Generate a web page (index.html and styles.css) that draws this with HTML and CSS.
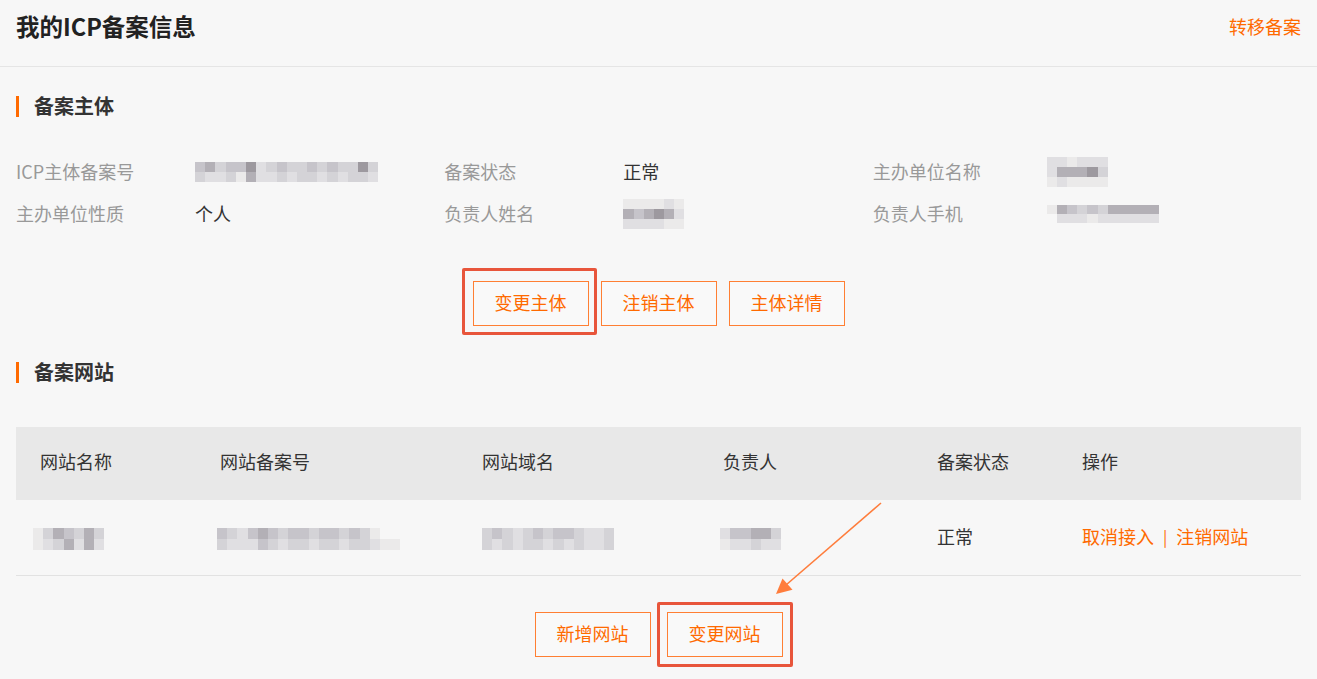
FILE: index.html
```html
<!DOCTYPE html>
<html lang="zh-CN">
<head>
<meta charset="utf-8">
<title>我的ICP备案信息</title>
<link rel="stylesheet" href="styles.css">
</head>
<body>
<div class="page">
  <header class="topbar">
    <h1 class="page-title">我的ICP备案信息</h1>
    <a class="link top-link">转移备案</a>
  </header>

  <main class="main">
    <h2 class="sec-title first">备案主体</h2>

    <div class="info-grid">
      <div class="info-item">
        <span class="info-label">ICP主体备案号</span>
        <span class="info-value">
          <span class="mosaic">
            <span class="mrow"><i class="s3"></i><i class="s4"></i><i class="s2"></i><i class="s3"></i><i class="s3"></i><i class="s5"></i><i class="s1"></i><i class="s2"></i><i class="s3"></i><i class="s2"></i><i class="s2"></i><i class="s3"></i><i class="s2"></i><i class="s3"></i><i class="s2"></i><i class="s2"></i><i class="s5"></i><i class="s2"></i></span>
            <span class="mrow"><i class="s2"></i><i class="s1"></i><i class="s1"></i><i class="s2"></i><i class="s0"></i><i class="s4"></i><i class="s1"></i><i class="s1"></i><i class="s2"></i><i class="s1"></i><i class="s2"></i><i class="s2"></i><i class="s1"></i><i class="s2"></i><i class="s1"></i><i class="s2"></i><i class="s2"></i><i class="s1"></i></span>
          </span>
        </span>
      </div>
      <div class="info-item">
        <span class="info-label">备案状态</span>
        <span class="info-value">正常</span>
      </div>
      <div class="info-item">
        <span class="info-label">主办单位名称</span>
        <span class="info-value">
          <span class="mosaic shift">
            <span class="mrow"><i class="s1"></i><i class="s1"></i><i class="s0"></i><i class="s1"></i><i class="s1"></i><i class="s1"></i></span>
            <span class="mrow"><i class="s1"></i><i class="s4"></i><i class="s4"></i><i class="s4"></i><i class="s5"></i><i class="s2"></i></span>
            <span class="mrow"><i class="s0"></i><i class="s1"></i><i class="s0"></i><i class="s0"></i><i class="s0"></i><i class="s0"></i></span>
          </span>
        </span>
      </div>

      <div class="info-item">
        <span class="info-label">主办单位性质</span>
        <span class="info-value">个人</span>
      </div>
      <div class="info-item">
        <span class="info-label">负责人姓名</span>
        <span class="info-value">
          <span class="mosaic">
            <span class="mrow"><i class="s0"></i><i class="s0"></i><i class="s0"></i><i class="s0"></i><i class="s1"></i><i class="s0"></i></span>
            <span class="mrow"><i class="s4"></i><i class="s3"></i><i class="s4"></i><i class="s5"></i><i class="s4"></i><i class="s1"></i></span>
            <span class="mrow"><i class="s1"></i><i class="s1"></i><i class="s1"></i><i class="s1"></i><i class="s0"></i><i class="s0"></i></span>
          </span>
        </span>
      </div>
      <div class="info-item">
        <span class="info-label">负责人手机</span>
        <span class="info-value">
          <span class="mosaic shift short">
            <span class="mrow"><i class="s0"></i><i class="s4"></i><i class="s3"></i><i class="s2"></i><i class="s3"></i><i class="s2"></i><i class="s4"></i><i class="s4"></i><i class="s4"></i><i class="s4"></i><i class="s4"></i></span>
            <span class="mrow"><i class="bg"></i><i class="s1"></i><i class="s1"></i><i class="s1"></i><i class="s0"></i><i class="s1"></i><i class="s1"></i><i class="s1"></i><i class="s1"></i><i class="s1"></i><i class="s1"></i></span>
          </span>
        </span>
      </div>
    </div>

    <div class="btn-row">
      <span class="hl hl-a"><button class="btn">变更主体</button></span>
      <button class="btn">注销主体</button>
      <button class="btn">主体详情</button>
    </div>

    <h2 class="sec-title">备案网站</h2>

    <div class="table">
      <div class="t-head">
        <span>网站名称</span>
        <span>网站备案号</span>
        <span>网站域名</span>
        <span>负责人</span>
        <span>备案状态</span>
        <span>操作</span>
      </div>
      <div class="t-row">
        <span>
          <span class="mosaic pull">
            <span class="mrow tall"><i class="s0"></i><i class="s2"></i><i class="s4"></i><i class="s3"></i><i class="s2"></i><i class="s4"></i><i class="s2"></i></span>
            <span class="mrow tall"><i class="s0"></i><i class="s1"></i><i class="s2"></i><i class="s4"></i><i class="s1"></i><i class="s4"></i><i class="s1"></i></span>
          </span>
        </span>
        <span>
          <span class="mosaic pull-s">
            <span class="mrow tall"><i class="s3"></i><i class="s2"></i><i class="s1"></i><i class="s3"></i><i class="s4"></i><i class="s3"></i><i class="s2"></i><i class="s3"></i><i class="s3"></i><i class="s2"></i><i class="s3"></i><i class="s3"></i><i class="s2"></i><i class="s3"></i><i class="s2"></i><i class="s0"></i><i class="bg"></i><i class="bg"></i></span>
            <span class="mrow tall"><i class="s2"></i><i class="s1"></i><i class="s1"></i><i class="s1"></i><i class="s3"></i><i class="s2"></i><i class="s1"></i><i class="s2"></i><i class="s2"></i><i class="s1"></i><i class="s2"></i><i class="s2"></i><i class="s1"></i><i class="s2"></i><i class="s2"></i><i class="s1"></i><i class="s0"></i><i class="s0"></i></span>
          </span>
        </span>
        <span>
          <span class="mosaic">
            <span class="mrow tall"><i class="s2"></i><i class="s3"></i><i class="s2"></i><i class="s1"></i><i class="s2"></i><i class="s3"></i><i class="s2"></i><i class="s3"></i><i class="s3"></i><i class="s2"></i><i class="s1"></i><i class="s1"></i><i class="s2"></i></span>
            <span class="mrow tall"><i class="s2"></i><i class="s1"></i><i class="s2"></i><i class="s1"></i><i class="s2"></i><i class="s2"></i><i class="s1"></i><i class="s2"></i><i class="s1"></i><i class="s2"></i><i class="s1"></i><i class="s1"></i><i class="s2"></i></span>
          </span>
        </span>
        <span>
          <span class="mosaic pull-s">
            <span class="mrow tall"><i class="s1"></i><i class="s3"></i><i class="s3"></i><i class="s4"></i><i class="s4"></i><i class="s2"></i></span>
            <span class="mrow tall"><i class="s0"></i><i class="s1"></i><i class="s1"></i><i class="s2"></i><i class="s1"></i><i class="s1"></i></span>
          </span>
        </span>
        <span class="t-val">正常</span>
        <span class="actions"><a class="link">取消接入</a><span class="sep">|</span><a class="link">注销网站</a></span>
      </div>
    </div>

    <div class="btn-row wide">
      <button class="btn">新增网站</button>
      <span class="hl hl-b"><button class="btn">变更网站</button></span>
    </div>
  </main>

  <svg class="arrow" width="130" height="110" viewBox="0 0 130 110" aria-hidden="true">
    <line x1="121" y1="13" x2="26" y2="95" stroke="#ff7d3c" stroke-width="1.6"/>
    <polygon points="16,104 32.5,99.8 22.5,88.4" fill="#ff7d3c"/>
  </svg>
</div>
</body>
</html>
```

FILE: styles.css
```css
* { box-sizing: border-box; }

html, body {
  margin: 0;
  padding: 0;
  background: #f7f7f7;
}

body {
  font-family: "Noto Sans CJK SC", "Noto Sans", "Liberation Sans", sans-serif;
  color: #333;
  font-size: 18px;
}

.page {
  position: relative;
  width: 1317px;
  height: 679px;
  overflow: hidden;
}

.topbar {
  height: 67px;
  padding: 11px 16px 0 16px;
  display: flex;
  justify-content: space-between;
  align-items: flex-start;
  border-bottom: 1px solid #e5e5e5;
}

.page-title {
  margin: 0;
  font-size: 23.5px;
  line-height: 30px;
  font-weight: 700;
  color: #222;
}

.link {
  color: #ff6a00;
  cursor: pointer;
  text-decoration: none;
}

.top-link {
  font-size: 18px;
  line-height: 30px;
}

.main {
  padding: 0 16px;
}

.sec-title {
  margin: 36px 0 0 0;
  height: 21px;
  line-height: 19px;
  font-size: 20px;
  font-weight: 700;
  color: #333;
  border-left: 3px solid #ff6a00;
  padding-left: 15px;
}

.sec-title.first {
  margin-top: 29px;
}

.info-grid {
  margin-top: 34px;
  display: grid;
  grid-template-columns: 1fr 1fr 1fr;
  grid-auto-rows: 42px;
}

.info-item {
  display: flex;
  align-items: center;
}

.info-label {
  width: 179px;
  flex: none;
  color: #999;
  line-height: 40px;
  padding-bottom: 2px;
}

.info-value {
  display: flex;
  align-items: center;
  color: #333;
  line-height: 40px;
  padding-bottom: 2px;
}

.mosaic {
  display: inline-flex;
  flex-direction: column;
  margin-top: 2px;
}

.mosaic.shift { margin-left: -5px; }
.mosaic.pull { margin-left: -7px; }
.mosaic.pull-s { margin-left: -3px; }

.mrow {
  display: flex;
}

.mrow i {
  display: block;
  width: 10.2px;
  height: 10px;
}

.mosaic.short .mrow i { height: 9px; }
.mrow.tall i { height: 11px; }

.s0 { background: #ebeaea; }
.s1 { background: #e0dfe2; }
.s2 { background: #d4d3d7; }
.s3 { background: #c6c4ca; }
.s4 { background: #b3b0b6; }
.s5 { background: #9d999f; }
.bg { background: transparent; }

.btn-row {
  margin-top: 46px;
  display: flex;
  justify-content: center;
  gap: 12px;
}

.btn-row.wide {
  margin-top: 36px;
  gap: 16px;
}

.btn {
  width: 116px;
  height: 45px;
  border: 1px solid #ff7f33;
  background: #f9f9f9;
  color: #ff6a00;
  font-family: inherit;
  font-size: 18px;
  padding: 0 0 3px 0;
  display: block;
  cursor: pointer;
}

.hl {
  position: relative;
  display: block;
}

.hl::after {
  content: "";
  position: absolute;
  border: 3px solid #e8553b;
  border-radius: 2px;
  pointer-events: none;
}

.hl-a::after {
  top: -13px;
  bottom: -9px;
  left: -11px;
  right: -8px;
}

.hl-b::after {
  top: -10px;
  bottom: -10px;
  left: -10px;
  right: -10px;
}

.table {
  margin-top: 44px;
}

.t-head,
.t-row {
  display: grid;
  grid-template-columns: 180px 262px 241px 214px 145px 1fr;
  align-items: center;
  padding-left: 24px;
}

.t-head {
  height: 73px;
  background: #e8e8e8;
  color: #333;
  padding-bottom: 5px;
}

.t-row {
  height: 76px;
  border-bottom: 1px solid #e2e2e2;
}

.t-row > span {
  display: flex;
  align-items: center;
}

.t-val {
  color: #333;
  padding-bottom: 3px;
}

.actions {
  color: #ff6a00;
  padding-bottom: 3px;
}

.sep {
  margin: 0 9px;
  color: #ff6a00;
  font-size: 16px;
}

.arrow {
  position: absolute;
  left: 760px;
  top: 490px;
}
```
